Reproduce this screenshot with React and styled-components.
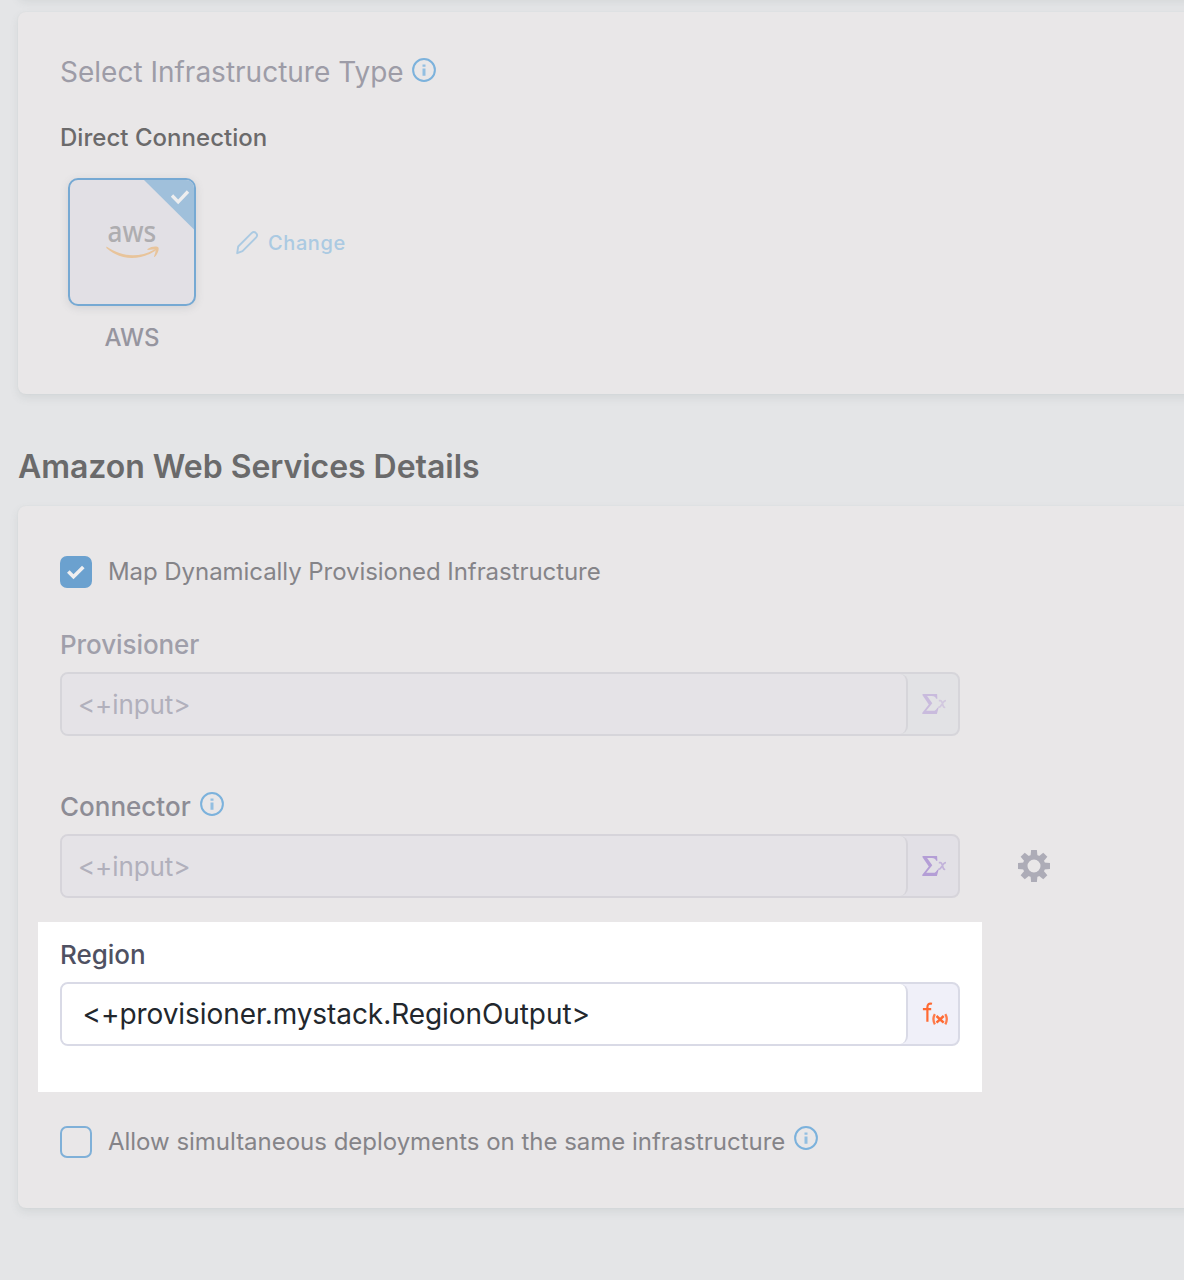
import React from "react";
import styled, { createGlobalStyle } from "styled-components";

const GlobalStyle = createGlobalStyle`
  * { box-sizing: border-box; }
  body { margin: 0; background: #e4e5e7; font-family: Inter, "Liberation Sans", sans-serif; }
`;

const Page = styled.main`
  height: 1280px;
  padding-left: 18px;
  overflow: hidden;
`;

const Card = styled.section`
  height: ${(p) => p.$height}px;
  margin-right: -24px;
  padding: ${(p) => p.$padTop || 0}px 0 0 42px;
  background: #e9e7e8;
  border-radius: 8px;
  box-shadow: 0 4px 8px rgba(96, 115, 115, 0.12), 0 0 2px rgba(60, 90, 85, 0.05);
`;

const PreviousCard = styled(Card)`
  margin: -24px -24px 14px 0;
`;

const Text = styled.span`
  font-size: ${(p) => p.$size}px;
  font-weight: ${(p) => p.$weight || 400};
  letter-spacing: ${(p) => p.$track || 0}px;
  color: ${(p) => p.$color};
  line-height: 32px;
  white-space: nowrap;
`;

const Row = styled.div`
  display: flex;
  align-items: center;
  height: 32px;
  gap: ${(p) => p.$gap || 0}px;
  margin-top: ${(p) => p.$top || 0}px;
`;

const SectionTitle = styled.h2`
  margin: 57px 0 23px;
  font-size: 32px;
  font-weight: 600;
  letter-spacing: -0.04px;
  line-height: 32px;
  color: #6a6a6b;
`;

const TypePicker = styled.div`
  display: flex;
  gap: 38px;
  margin: 24px 0 0 8px;
`;

const TypeOption = styled.div`
  display: flex;
  flex-direction: column;
  align-items: center;
  gap: 16px;
  width: 128px;
`;

const Tile = styled.div`
  width: 128px;
  height: 128px;
  border: 2px solid #76a9d3;
  border-radius: 10px;
  background: #e2e0e5;
  overflow: hidden;
  box-shadow: 0 2px 8px rgba(96, 97, 112, 0.16);
  svg { display: block; }
`;

const ChangeLink = styled.a`
  display: flex;
  align-items: center;
  gap: 7px;
  height: 128px;
  padding-top: 2px;
`;

const Icon = styled.svg`
  flex: none;
  display: block;
  margin-bottom: ${(p) => p.$lift || 0}px;
`;

const Checkbox = styled.div`
  display: flex;
  align-items: center;
  justify-content: center;
  width: 32px;
  height: 32px;
  border: 2px solid ${(p) => (p.$checked ? "#6ba1cf" : "#7fb0d8")};
  border-radius: 7px;
  background: ${(p) => (p.$checked ? "#6ba1cf" : "transparent")};
`;

const FieldRow = styled.div`
  display: flex;
  align-items: center;
  gap: 58px;
  margin-top: ${(p) => p.$top}px;
`;

const FieldBox = styled.div`
  display: flex;
  width: 900px;
  height: 64px;
  border: 2px solid ${(p) => p.$border};
  border-radius: 8px;
  background: ${(p) => p.$side};
`;

const FieldValue = styled.div`
  display: flex;
  align-items: center;
  width: 846px;
  padding: ${(p) => p.$drop}px 0 0 ${(p) => p.$inset}px;
  border-right: 2px solid ${(p) => p.$border};
  border-radius: 6px 8px 8px 6px;
  background: ${(p) => p.$fill};
`;

const FieldType = styled.div`
  display: flex;
  flex: 1;
  align-items: center;
  justify-content: center;
  padding-left: 2px;
`;

const Highlight = styled.div`
  width: 944px;
  height: 170px;
  margin: 24px 0 34px -22px;
  padding: 17px 22px 0;
  background: #fff;
`;

const InfoIcon = ({ lift }) => (
  <Icon width="24" height="24" viewBox="0 0 24 24" $lift={lift}>
    <circle cx="12" cy="12" r="10.9" fill="none" stroke="#7cb2dc" strokeWidth="2" />
    <path d="M10.500 6.400h3v2.300h-3zM10.500 10.500h3v7.200h-3z" fill="#93bfe1" />
  </Icon>
);

const AwsTileArt = () => (
  <svg width="124" height="124" viewBox="0 0 124 124">
    <path d="M74 0H124V49.5Z" fill="#a0c0db" />
    <path d="M102 15.500l6.200 6.300L118 11.500" fill="none" stroke="#eeeeef" strokeWidth="3.300" />
    <text transform="translate(37.500 62.400) scale(0.885 1)" fontFamily="Noto Sans, Open Sans, sans-serif" fontWeight="500" fontSize="29.500" fill="#aeadb0">
      aws
    </text>
    <path d="M36.500 66.500c15 10.500 32.500 11.500 47.500 3.200q1.800-.4 1 1.300C69 81 50 80.300 36.300 68z" fill="#e8c49b" />
    <path d="M77.500 69c3.500-2.800 9.800-3.200 10.900-1.600 1 2-.8 7.300-3.900 9.600q-.8.300-.5-.6c1-2.600 2-5.300 1.300-6.200-1-1.100-4.500-.6-7.300-.3q-1-.1-.5-.9z" fill="#e8c49b" />
  </svg>
);

const PencilIcon = () => (
  <Icon width="27" height="26" viewBox="0 0 27 26">
    <path
      d="M4.200 16.500L17.800 2.900q2.100-1.700 4.200.2t.2 4.300L8.500 21.200 3.200 23.200z"
      fill="none" stroke="#abcae2" strokeWidth="1.900" strokeLinejoin="round"
    />
  </Icon>
);

const CheckMark = () => (
  <Icon width="20" height="18" viewBox="0 0 20 18">
    <path d="M2.300 8.500l5.200 5.300L17.300 4" fill="none" stroke="#efeff0" strokeWidth="3.600" />
  </Icon>
);

const SigmaIcon = ({ color, soft }) => (
  <Icon width="26" height="24" viewBox="0 0 26 24">
    <path
      d="M1.500 2h14.600l.3 4.800h-1.300c-.6-2-1.700-2.800-4.200-2.800H6.100L11.300 11.200 5.200 18.800h6.800c2.500 0 3.300-1 4.300-3.100h1.300L15.900 22H1.300v-1.200L7.800 12.500 1.500 3.300z"
      fill={color}
    />
    <path d="M17.800 8.600h1.600q1 0 1.500 1.500l1.400 4.200q.4 1.300 1.900.9M25 8.600q-1.600 0-2.500 1.400l-3 4.200q-.9 1.300-2.300.9" fill="none" stroke={soft} strokeWidth="1.700" />
  </Icon>
);

const FxIcon = () => (
  <Icon width="28" height="28" viewBox="0 0 28 28">
    <path d="M12 3.800Q7.400 2.600 7.400 7.300V21.800M2.900 9.200H11.200" fill="none" stroke="#ff6a33" strokeWidth="2.200" />
    <path d="M14.900 14.200q-2.900 4.900 0 10.200M25.300 14.200q2.900 4.900 0 10.200" fill="none" stroke="#ff7a49" strokeWidth="2.300" />
    <path d="M16.500 16l7.200 6.600M23.700 16l-7.200 6.600" fill="none" stroke="#ff6a33" strokeWidth="2.500" />
  </Icon>
);

const GearIcon = () => (
  <Icon width="32" height="32" viewBox="-16 -16 32 32">
    <circle r="8.900" fill="none" stroke="#adacb7" strokeWidth="4.800" />
    {[0, 45, 90, 135, 180, 225, 270, 315].map((a) => (
      <path key={a} d="M-2.900-16H2.900L3.500-9.500H-3.500z" fill="#adacb7" transform={`rotate(${a})`} />
    ))}
  </Icon>
);

const Field = ({ value, size, track, drop = 2, border, side, fill, color, inset, icon, children }) => (
  <FieldRow $top={11}>
    <FieldBox $border={border} $side={side}>
      <FieldValue $inset={inset} $drop={drop} $border={border} $fill={fill}>
        <Text $size={size} $track={track} $color={color}>{value}</Text>
      </FieldValue>
      <FieldType>{icon}</FieldType>
    </FieldBox>
    {children}
  </FieldRow>
);

export default function App() {
  return (
    <Page>
      <GlobalStyle />
      <PreviousCard $height={22} />
      <Card $height={382} $padTop={44}>
        <Row $gap={8}>
          <Text $size={28} $color="#9d9ca7">Select Infrastructure Type</Text>
          <InfoIcon lift={4} />
        </Row>
        <Row $top={34}>
          <Text $size={24} $weight={500} $track={0.03} $color="#6b6a6b">Direct Connection</Text>
        </Row>
        <TypePicker>
          <TypeOption>
            <Tile><AwsTileArt /></Tile>
            <Text $size={24} $weight={500} $color="#96959f">AWS</Text>
          </TypeOption>
          <ChangeLink>
            <PencilIcon />
            <Text $size={20} $weight={500} $track={0.6} $color="#abcae2">Change</Text>
          </ChangeLink>
        </TypePicker>
      </Card>

      <SectionTitle>Amazon Web Services Details</SectionTitle>

      <Card $height={702} $padTop={50}>
        <Row $gap={16}>
          <Checkbox $checked><CheckMark /></Checkbox>
          <Text $size={24} $track={-0.06} $color="#858488">Map Dynamically Provisioned Infrastructure</Text>
        </Row>
        <Row $top={41}>
          <Text $size={26} $weight={500} $track={-0.08} $color="#a09faa">Provisioner</Text>
        </Row>
        <Field
          inset={16} size={26} track={-0.1} value="<+input>" color="#b1b0bc"
          border="#d6d5da" side="#e2e2e5" fill="#e5e3e7"
          icon={<SigmaIcon color="#c9bbdd" soft="#d2c8df" />}
        />
        <Row $top={55} $gap={9}>
          <Text $size={26} $weight={500} $color="#8d8c95">Connector</Text>
          <InfoIcon lift={6} />
        </Row>
        <Field
          inset={16} size={26} track={-0.1} value="<+input>" color="#b1b0bc"
          border="#d6d4da" side="#e2e0e6" fill="#e5e3e7"
          icon={<SigmaIcon color="#b49ed6" soft="#c2b2da" />}
        >
          <GearIcon />
        </Field>
        <Highlight>
          <Row>
            <Text $size={26} $weight={500} $track={-0.05} $color="#4f5162">Region</Text>
          </Row>
          <Field
            inset={20.5} drop={0} size={28} track={-0.07} value="<+provisioner.mystack.RegionOutput>" color="#22272d"
            border="#d9dae6" side="#f0f0f9" fill="#ffffff"
            icon={<FxIcon />}
          />
        </Highlight>
        <Row $gap={16}>
          <Checkbox />
          <Row $gap={9}>
            <Text $size={24} $track={-0.02} $color="#858488">Allow simultaneous deployments on the same infrastructure</Text>
            <InfoIcon lift={8} />
          </Row>
        </Row>
      </Card>
    </Page>
  );
}
